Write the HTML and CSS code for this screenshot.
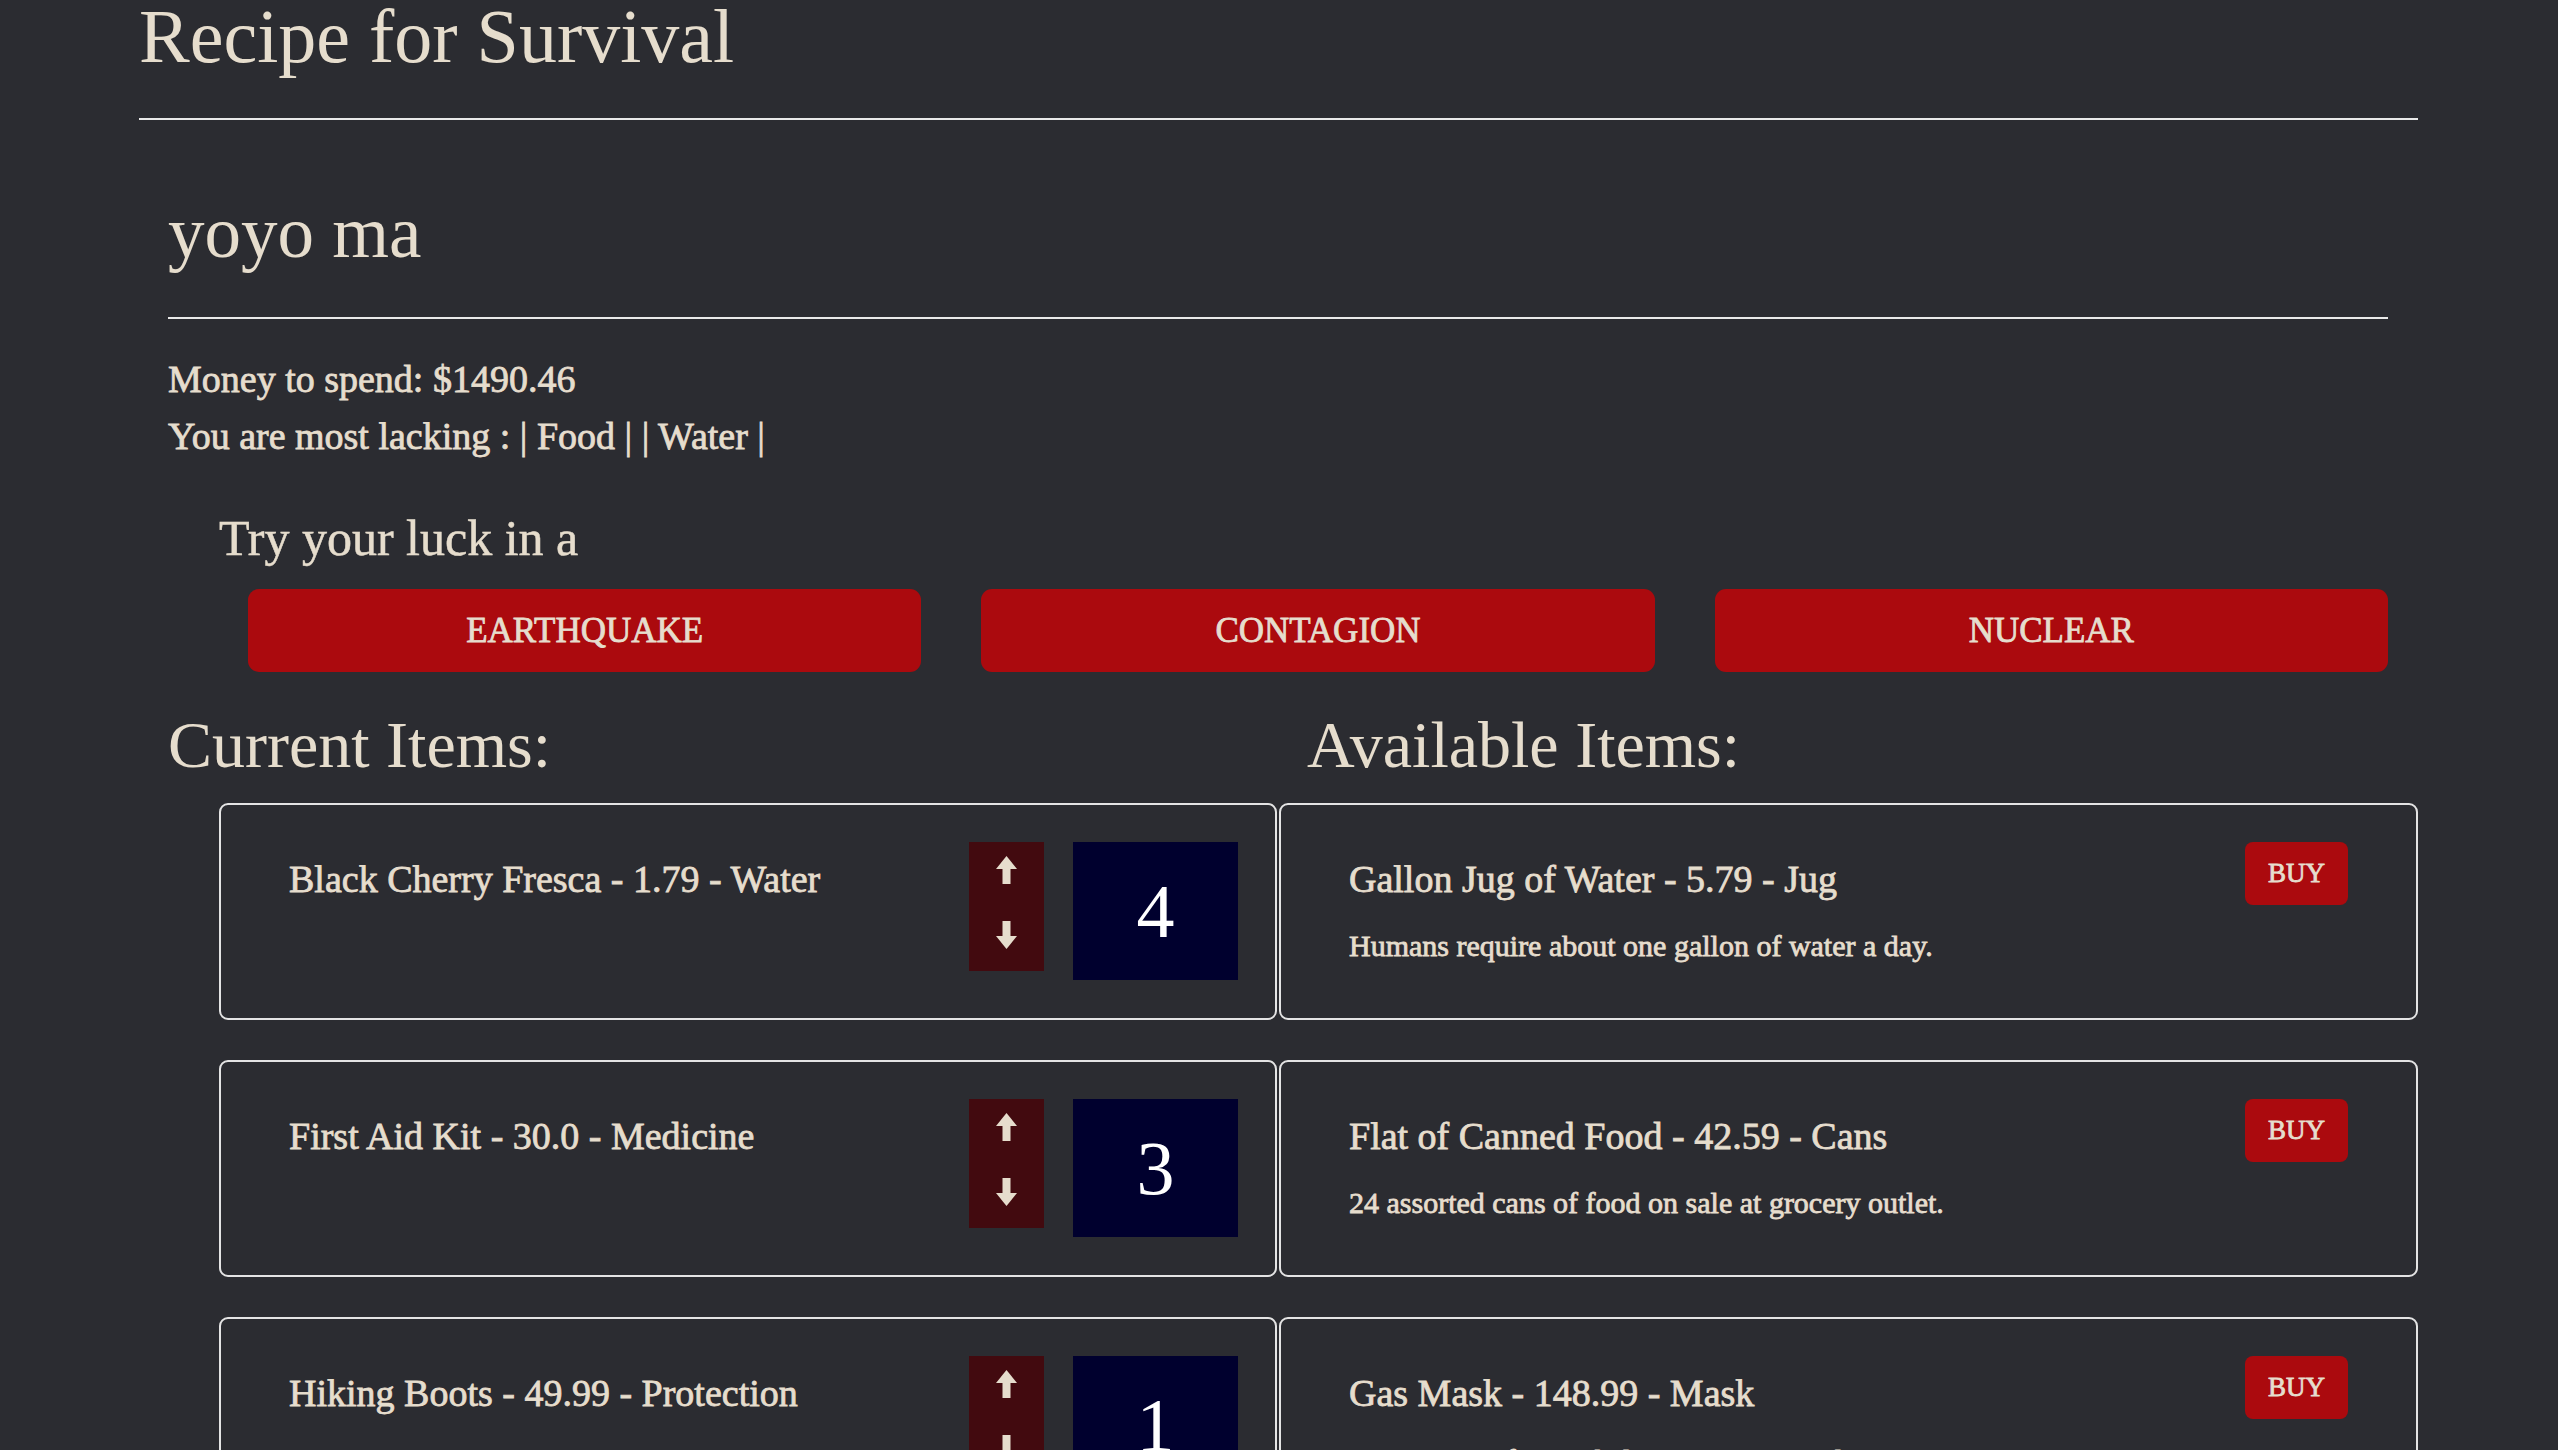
FILE: index.html
```html
<!DOCTYPE html>
<html lang="en">
<head>
<meta charset="utf-8">
<title>Recipe for Survival</title>
<link rel="stylesheet" href="styles.css">
</head>
<body>
<div class="page">
  <h1 class="title">Recipe for Survival</h1>
  <hr class="rule">
  <section class="profile">
    <h2 class="name">yoyo ma</h2>
    <hr class="rule">
    <p class="stat">Money to spend: $1490.46</p>
    <p class="stat">You are most lacking : | Food | | Water |</p>
    <h3 class="luck">Try your luck in a</h3>
    <div class="disasters">
      <button class="disaster">EARTHQUAKE</button>
      <button class="disaster">CONTAGION</button>
      <button class="disaster">NUCLEAR</button>
    </div>
  </section>

  <div class="headings">
    <h2 class="col-title col-title-left">Current Items:</h2>
    <h2 class="col-title col-title-right">Available Items:</h2>
  </div>

  <div class="items">
    <div class="card card-current">
      <h4 class="item-name">Black Cherry Fresca - 1.79 - Water</h4>
      <div class="controls">
        <div class="stepper">
          <svg class="arrow" viewBox="0 0 21 28" width="21" height="28"><polygon points="0,13 10.5,0 21,13"/><rect x="6.5" y="12" width="8" height="16"/></svg>
          <svg class="arrow" viewBox="0 0 21 28" width="21" height="28"><polygon points="0,15 10.5,28 21,15"/><rect x="6.5" y="0" width="8" height="16"/></svg>
        </div>
        <div class="count">4</div>
      </div>
    </div>
    <div class="card card-available">
      <div class="info">
        <h4 class="item-name">Gallon Jug of Water - 5.79 - Jug</h4>
        <p class="desc">Humans require about one gallon of water a day.</p>
      </div>
      <button class="buy">BUY</button>
    </div>

    <div class="card card-current">
      <h4 class="item-name">First Aid Kit - 30.0 - Medicine</h4>
      <div class="controls">
        <div class="stepper">
          <svg class="arrow" viewBox="0 0 21 28" width="21" height="28"><polygon points="0,13 10.5,0 21,13"/><rect x="6.5" y="12" width="8" height="16"/></svg>
          <svg class="arrow" viewBox="0 0 21 28" width="21" height="28"><polygon points="0,15 10.5,28 21,15"/><rect x="6.5" y="0" width="8" height="16"/></svg>
        </div>
        <div class="count">3</div>
      </div>
    </div>
    <div class="card card-available">
      <div class="info">
        <h4 class="item-name">Flat of Canned Food - 42.59 - Cans</h4>
        <p class="desc">24 assorted cans of food on sale at grocery outlet.</p>
      </div>
      <button class="buy">BUY</button>
    </div>

    <div class="card card-current">
      <h4 class="item-name">Hiking Boots - 49.99 - Protection</h4>
      <div class="controls">
        <div class="stepper">
          <svg class="arrow" viewBox="0 0 21 28" width="21" height="28"><polygon points="0,13 10.5,0 21,13"/><rect x="6.5" y="12" width="8" height="16"/></svg>
          <svg class="arrow" viewBox="0 0 21 28" width="21" height="28"><polygon points="0,15 10.5,28 21,15"/><rect x="6.5" y="0" width="8" height="16"/></svg>
        </div>
        <div class="count">1</div>
      </div>
    </div>
    <div class="card card-available">
      <div class="info">
        <h4 class="item-name">Gas Mask - 148.99 - Mask</h4>
        <p class="desc">Protects you from inhaling toxic materials.</p>
      </div>
      <button class="buy">BUY</button>
    </div>
  </div>
</div>
</body>
</html>
```

FILE: styles.css
```css
html, body {
  margin: 0;
  padding: 0;
}

body {
  background: #2b2c31;
  color: #e6ddcd;
  font-family: "Liberation Serif", "Times New Roman", serif;
}

.page {
  padding: 0 140px 60px 139px;
}

.title {
  margin: 0;
  font-size: 76px;
  line-height: 72px;
  font-weight: normal;
}

.rule {
  margin: 0;
  border: 0;
  border-top: 2px solid #e9e9e9;
  height: 0;
}

.page > .rule {
  margin-top: 46px;
}

.profile {
  padding: 0 30px 0 29px;
}

.name {
  margin: 73px 0 0;
  font-size: 73px;
  line-height: 80px;
  font-weight: normal;
}

.profile .rule {
  margin-top: 44px;
  margin-bottom: 32px;
}

.medium,
.stat,
.item-name,
.desc,
.disaster,
.buy {
  font-weight: normal;
  -webkit-text-stroke: 0.8px currentColor;
}

.stat {
  margin: 0;
  font-size: 38px;
  line-height: 57px;
}

.luck {
  margin: 43px 0 0 51px;
  font-size: 50px;
  line-height: 60px;
  font-weight: normal;
  -webkit-text-stroke: 0.5px currentColor;
}

.disasters {
  display: flex;
  gap: 60px;
  margin: 21px 0 0 80px;
}

.disaster {
  flex: 1;
  height: 83px;
  border: 0;
  border-radius: 11px;
  background: #ab0a0e;
  color: #e6ddcd;
  font-family: "Liberation Serif", "Times New Roman", serif;
  font-size: 35px;
  line-height: 36px;
  padding: 0;
}

.headings {
  display: grid;
  grid-template-columns: 1138px 1fr;
  margin-top: 35px;
}

.col-title {
  margin: 0;
  font-size: 66px;
  line-height: 76px;
  font-weight: normal;
}

.col-title-left {
  padding-left: 29px;
}

.col-title-right {
  padding-left: 30px;
}

.items {
  display: grid;
  grid-template-columns: 1138px 1fr;
  row-gap: 40px;
  margin-top: 20px;
}

.card {
  border: 2px solid #e4e4e4;
  border-radius: 9px;
  display: flex;
  justify-content: space-between;
  align-items: flex-start;
  box-sizing: border-box;
  min-height: 217px;
}

.card-current {
  margin-left: 80px;
  padding: 37px 37px 38px 68px;
}

.card-available {
  margin-left: 2px;
  padding: 37px 68px 38px 68px;
}

.item-name {
  margin: 14px 0 0;
  font-size: 38px;
  line-height: 46px;
}

.desc {
  margin: 24px 0 0;
  font-size: 30px;
  line-height: 40px;
}

.controls {
  display: flex;
  gap: 29px;
  align-items: flex-start;
}

.stepper {
  width: 75px;
  height: 129px;
  background: #420a0f;
  display: flex;
  flex-direction: column;
  align-items: center;
  justify-content: space-between;
  padding: 14px 0 22px;
  box-sizing: border-box;
}

.arrow {
  display: block;
  fill: #e6ddcd;
}

.count {
  width: 165px;
  height: 138px;
  background: #00002e;
  color: #ffffff;
  font-size: 76px;
  display: flex;
  align-items: center;
  justify-content: center;
}

.buy {
  width: 103px;
  height: 63px;
  border: 0;
  border-radius: 8px;
  background: #ab0a0e;
  color: #e6ddcd;
  font-family: "Liberation Serif", "Times New Roman", serif;
  font-size: 27px;
  padding: 0;
  flex: none;
}
```
